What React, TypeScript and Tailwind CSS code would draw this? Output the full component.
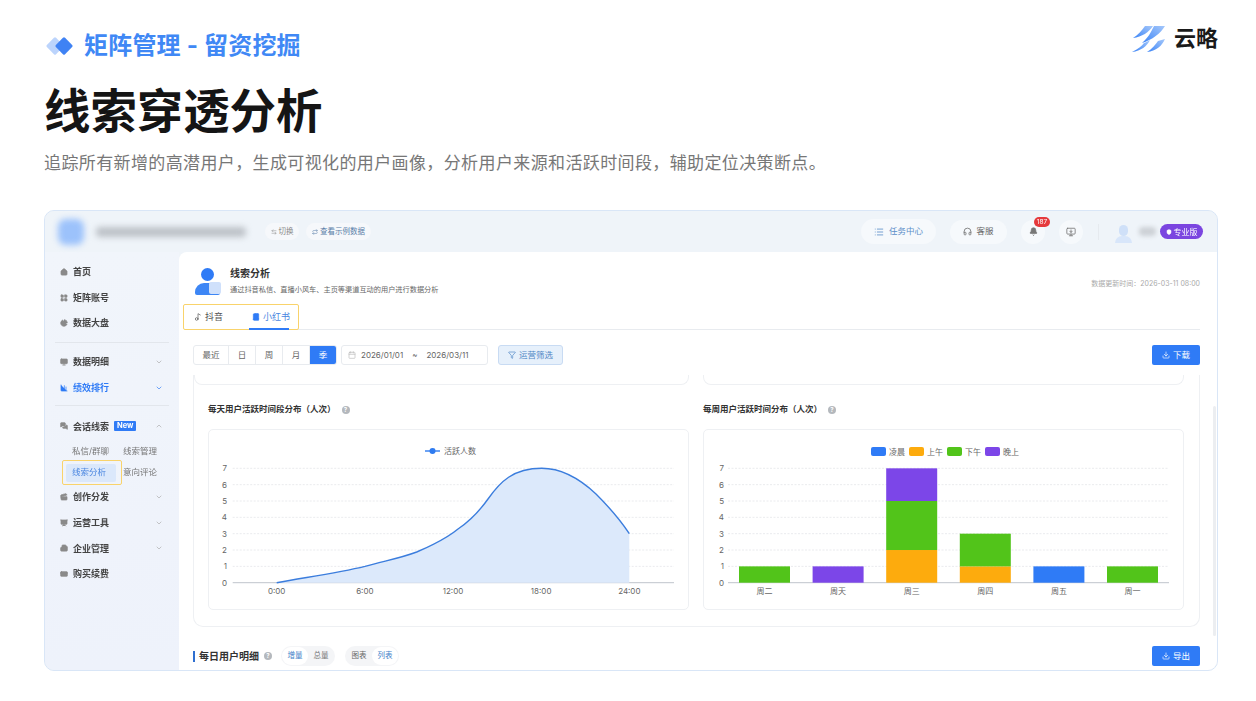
import {
  BarChart3,
  Bell,
  BookMarked,
  Building2,
  Calendar,
  ChevronDown,
  ChevronUp,
  Clapperboard,
  CreditCard,
  Download,
  Filter,
  Headphones,
  Home,
  LayoutGrid,
  List,
  MessagesSquare,
  Monitor,
  MonitorDown,
  Music2,
  PieChart,
  Presentation,
  Shield,
  ArrowLeftRight,
  Repeat,
} from "lucide-react";

const cjk = { fontFamily: '"Inter", "Noto Sans CJK SC", sans-serif' };

const ticks = [7, 6, 5, 4, 3, 2, 1, 0];
const tickY = (v: number) => 153.7 - v * 16.34;

function Grid({ x1, x2, lx }: { x1: number; x2: number; lx: number }) {
  return (
    <>
      {ticks.map((t) => (
        <g key={t}>
          <text x={lx} y={tickY(t) + 3} textAnchor="end" fontSize="8" fill="#666">
            {t}
          </text>
          {t === 0 ? (
            <line x1={x1} x2={x2} y1={tickY(t)} y2={tickY(t)} stroke="#bfc4cc" strokeWidth="1" />
          ) : (
            <line x1={x1} x2={x2} y1={tickY(t)} y2={tickY(t)} stroke="#e4e6ea" strokeWidth="0.8" strokeDasharray="2 1.5" />
          )}
        </g>
      ))}
    </>
  );
}

function AreaChart() {
  const curve =
    "M68.7 153.7C100 148 130 144 157 137.4C175 132 190 130 208.7 123C225 116 238 110 250 100C262 92 270 84 280 70C292 53 305 39.3 333.7 39.3C355 39.3 372 50 388 65C402 79 413 92 421.3 104.7";
  return (
    <svg viewBox="1 1 479 179" className="block w-full h-full" style={cjk}>
      <Grid x1={24.7} x2={466} lx={19} />
      <path d={curve + "V153.7Z"} fill="#dce9fb" />
      <path d={curve} fill="none" stroke="#3b7ddd" strokeWidth="1.4" />
      <line x1={217} x2={232} y1={22} y2={22} stroke="#2f7bf0" strokeWidth="1.4" />
      <circle cx={224.5} cy={22} r={3} fill="#2f7bf0" />
      <text x={236} y={25} fontSize="8" fill="#666">活跃人数</text>
      {["0:00", "6:00", "12:00", "18:00", "24:00"].map((l, i) => (
        <text key={l} x={68.7 + i * 88.15} y={165} textAnchor="middle" fontSize="8" fill="#666">
          {l}
        </text>
      ))}
    </svg>
  );
}

const colors = { dawn: "#2f7bf6", am: "#fdab0d", pm: "#52c41a", night: "#7c46e8" };

const bars: { label: string; segs: [string, number][] }[] = [
  { label: "周二", segs: [[colors.pm, 1]] },
  { label: "周天", segs: [[colors.night, 1]] },
  { label: "周三", segs: [[colors.am, 2], [colors.pm, 3], [colors.night, 2]] },
  { label: "周四", segs: [[colors.am, 1], [colors.pm, 2]] },
  { label: "周五", segs: [[colors.dawn, 1]] },
  { label: "周一", segs: [[colors.pm, 1]] },
];

const legend = [
  { name: "凌晨", color: colors.dawn, x: 168 },
  { name: "上午", color: colors.am, x: 206 },
  { name: "下午", color: colors.pm, x: 244 },
  { name: "晚上", color: colors.night, x: 282 },
];

function BarChart() {
  return (
    <svg viewBox="1 1 479 179" className="block w-full h-full" style={cjk}>
      <Grid x1={25} x2={466} lx={21} />
      {bars.map((b, i) => {
        const x = 36 + i * 73.6;
        let acc = 0;
        return (
          <g key={b.label}>
            {b.segs.map(([c, n]) => {
              const y = tickY(acc + n);
              acc += n;
              return <rect key={c} x={x} y={y} width={51} height={n * 16.34} fill={c} />;
            })}
            <text x={x + 25.5} y={165} textAnchor="middle" fontSize="8" fill="#666">
              {b.label}
            </text>
          </g>
        );
      })}
      {legend.map((l) => (
        <g key={l.name}>
          <rect x={l.x} y={18} width={15} height={9} rx={2} fill={l.color} />
          <text x={l.x + 18} y={25.5} fontSize="8" fill="#666">
            {l.name}
          </text>
        </g>
      ))}
    </svg>
  );
}

function NavItem({
  icon: Icon,
  label,
  arrow,
  active,
  children,
}: {
  icon: typeof Home;
  label: string;
  arrow?: "down" | "up";
  active?: boolean;
  children?: React.ReactNode;
}) {
  return (
    <div className={`flex items-center h-[25.7px] pl-[15px] pr-[16px] text-[9px] font-semibold ${active ? "text-[#2f7bf6]" : "text-[#444]"}`}>
      <Icon size={8} strokeWidth={2.2} className={`mr-[5px] ${active ? "text-[#2f7bf6]" : "text-[#8a8a8a]"}`} fill="currentColor" />
      <span>{label}</span>
      {children}
      {arrow === "down" && <ChevronDown size={8} className={`ml-auto ${active ? "text-[#2f7bf6]" : "text-[#aaa]"}`} />}
      {arrow === "up" && <ChevronUp size={8} className="ml-auto text-[#aaa]" />}
    </div>
  );
}

function Sidebar() {
  return (
    <aside className="w-[134px] shrink-0 pt-[7px] bg-gradient-to-b from-[#f1f5fb] to-[#eef2fb]">
      <NavItem icon={Home} label="首页" />
      <NavItem icon={LayoutGrid} label="矩阵账号" />
      <NavItem icon={PieChart} label="数据大盘" />
      <div className="mx-[10px] my-[6px] h-px bg-[#e2e6ec]" />
      <NavItem icon={Monitor} label="数据明细" arrow="down" />
      <NavItem icon={BarChart3} label="绩效排行" arrow="down" active />
      <div className="mx-[10px] mt-[5px] mb-[7px] h-px bg-[#e2e6ec]" />
      <NavItem icon={MessagesSquare} label="会话线索" arrow="up">
        <span className="ml-[5px] px-[3px] h-[10px] leading-[10px] rounded-[1px] bg-[#2f7bf6] text-white text-[7.5px] font-bold">New</span>
      </NavItem>
      <div className="relative grid grid-cols-[59px_1fr] mt-[2px] pl-[17px] text-[8.5px] text-[#777]">
        <div className="h-[21px] flex items-center pl-[10px] whitespace-nowrap">私信/群聊</div>
        <div className="h-[21px] flex items-center pl-[2px] whitespace-nowrap">线索管理</div>
        <div className="h-[21px] flex items-center">
          <div className="w-[50px] h-[18px] ml-[4px] rounded-[2px] bg-[#dbe8fb] text-[#4a86e0] flex items-center pl-[6px] whitespace-nowrap">线索分析</div>
        </div>
        <div className="h-[21px] flex items-center pl-[2px] whitespace-nowrap">意向评论</div>
        {/* 标注框 */}
        <div className="absolute left-[17px] top-[18.5px] w-[60px] h-[25px] border border-[#f9d36b] rounded-[2px]" />
      </div>
      <div className="h-px" />
      <NavItem icon={Clapperboard} label="创作分发" arrow="down" />
      <NavItem icon={Presentation} label="运营工具" arrow="down" />
      <NavItem icon={Building2} label="企业管理" arrow="down" />
      <NavItem icon={CreditCard} label="购买续费" />
    </aside>
  );
}

function TopBar() {
  return (
    <div className="h-[41px] flex items-center bg-[#eff4f9] pl-[13px] pr-[14px] text-[8.5px]">
      <div className="w-[26px] h-[26px] rounded-[8px] bg-[#9cc2fb] blur-[3px]" />
      <div className="ml-[12px] w-[150px] h-[10px] rounded bg-[#bcc1c7] blur-[3px]" />
      <div className="ml-[19px] h-[17px] w-[34px] rounded-full bg-[#f6f8fb] flex items-center justify-center gap-[2px] text-[#888] text-[7.5px]">
        <ArrowLeftRight size={6} />
        切换
      </div>
      <div className="ml-[7px] h-[17px] w-[65px] rounded-full bg-[#f6f8fb] flex items-center justify-center gap-[2px] text-[#5a7ea8] text-[7.5px]">
        <Repeat size={6} />
        查看示例数据
      </div>
      <div className="ml-auto flex items-center">
        <div className="w-[75px] h-[25px] rounded-full bg-[#f6f9fc] flex items-center justify-center gap-[5px] text-[#5c8fc9]">
          <List size={10} />
          任务中心
        </div>
        <div className="ml-[14px] w-[57px] h-[24px] rounded-full bg-[#f6f9fc] flex items-center justify-center gap-[4px] text-[#666]">
          <Headphones size={9} />
          客服
        </div>
        <div className="relative ml-[14px] w-[24px] h-[24px] rounded-full bg-[#f6f9fc] flex items-center justify-center">
          <Bell size={9} className="text-[#777]" fill="currentColor" />
          <span className="absolute left-[13px] top-[-3px] w-[16px] h-[10px] rounded-full bg-[#e5393c] text-white text-[6.5px] leading-[10px] text-center">187</span>
        </div>
        <div className="ml-[14px] w-[24px] h-[24px] rounded-full bg-[#f6f9fc] flex items-center justify-center">
          <MonitorDown size={10} className="text-[#777]" />
        </div>
        <div className="ml-[15px] w-px h-[16px] bg-[#e6eaef]" />
        <div className="ml-[15px] w-[18px] h-[22px] flex flex-col items-center justify-end">
          <div className="w-[9px] h-[11px] rounded-full bg-[#cfe0f8]" />
          <div className="w-[17px] h-[7px] rounded-t-full bg-[#d8e6fa]" />
        </div>
        <div className="ml-[7px] w-[17px] h-[9px] rounded bg-[#cdd1d6] blur-[2px]" />
        <div className="ml-[4px] w-[43px] h-[15px] rounded-full bg-[#7b45e0] text-white flex items-center justify-center gap-[2px] text-[8px]">
          <Shield size={6} fill="currentColor" />
          专业版
        </div>
      </div>
    </div>
  );
}

function Helper() {
  return (
    <span className="inline-flex w-[8px] h-[8px] rounded-full bg-[#b4b8bd] text-white text-[6px] leading-none items-center justify-center font-bold">
      ?
    </span>
  );
}

function ChartTitle({ children }: { children: string }) {
  return (
    <div className="flex items-center gap-[6px] text-[8.5px] font-semibold text-[#333] h-[20px] pt-[1px]">
      {children}
      <Helper />
    </div>
  );
}

function Content() {
  return (
    <main className="flex-1 min-w-0 bg-white rounded-tl-lg pl-[14px] pr-[17px] relative">
      {/* 页头 */}
      <div className="h-[52px] flex items-center">
        <div className="relative w-[26px] h-[28px] mt-[8px] ml-[2px]">
          <div className="absolute left-[6px] top-0 w-[13px] h-[13px] rounded-full bg-[#2f7bf6]" />
          <div className="absolute left-0 top-[15px] w-[25px] h-[12px] rounded-t-[9px] rounded-b-[2px] bg-[#3d86f5]" />
          <div className="absolute left-[14px] top-[14px] w-[12px] h-[12px] rounded-[2px] bg-[#cfe0fb]" />
        </div>
        <div className="ml-[9px] mt-[8px]">
          <div className="text-[10px] font-semibold text-[#333] leading-[16px]">线索分析</div>
          <div className="text-[7.2px] text-[#666] leading-[18px]">通过抖音私信、直播小风车、主页等渠道互动的用户进行数据分析</div>
        </div>
        <div className="ml-auto mt-[12px] text-[7px] text-[#aaa]">数据更新时间：2026-03-11 08:00</div>
      </div>
      {/* 平台切换 */}
      <div className="relative h-[26px] border-b border-[#e8ebef] text-[9px]">
        <div className="absolute left-[-10px] top-0 w-[116px] h-[26px] border border-[#f9d36b] rounded-[2px] flex items-center">
          <div className="flex items-center gap-[3px] pl-[10px] text-[#555]">
            <Music2 size={8} />
            抖音
          </div>
          <div className="flex items-center gap-[3px] pl-[29px] text-[#4a86e0]">
            <BookMarked size={8} className="text-[#2f7bf6]" fill="currentColor" />
            小红书
          </div>
        </div>
        <div className="absolute left-[56px] bottom-[-1px] w-[40px] h-[2px] bg-[#2f7bf6]" />
      </div>
      {/* 筛选栏 */}
      <div className="flex items-center h-[20px] mt-[15px] text-[8.5px]">
        <div className="flex h-[20px] border border-[#e8ebef] rounded-[3px] text-[#666] overflow-hidden">
          <div className="w-[35px] flex items-center justify-center border-r border-[#e8ebef]">最近</div>
          {["日", "周", "月"].map((t) => (
            <div key={t} className="w-[27px] flex items-center justify-center border-r border-[#e8ebef]">
              {t}
            </div>
          ))}
          <div className="w-[26px] bg-[#2f7bf6] text-white flex items-center justify-center">季</div>
        </div>
        <div className="ml-[4px] w-[147px] h-[20px] border border-[#e8ebef] rounded-[3px] flex items-center pl-[6px] text-[#666] text-[8px]">
          <Calendar size={8} className="text-[#bbb]" />
          <span className="ml-[5px]">2026/01/01</span>
          <span className="ml-[9px]">~</span>
          <span className="ml-[9px]">2026/03/11</span>
        </div>
        <div className="ml-[10px] w-[65px] h-[20px] rounded-[3px] border border-[#c8dbf3] bg-[#e6f0fb] text-[#4f86c5] flex items-center justify-center gap-[3px]">
          <Filter size={8} />
          运营筛选
        </div>
        <div className="ml-auto w-[48px] h-[20px] rounded-[2px] bg-[#2f7bf6] text-white flex items-center justify-center gap-[3px]">
          <Download size={8} />
          下载
        </div>
      </div>
      {/* 图表 */}
      <div className="mt-[10px] h-[252px] border-x border-b border-[#eef0f3] rounded-b-[10px] pl-[14px] pr-[15px]">
        <div className="grid grid-cols-2 gap-[14px] h-[10px]">
          <div className="border-b border-x border-[#eef0f3] rounded-b-lg -ml-[14px]" />
          <div className="border-b border-x border-[#eef0f3] rounded-b-lg" />
        </div>
        <div className="grid grid-cols-2 gap-[14px] mt-[14px]">
          <div>
            <ChartTitle>每天用户活跃时间段分布（人次）</ChartTitle>
            <div className="mt-[10px] h-[181px] border border-[#eef0f3] rounded-[5px]">
              <AreaChart />
            </div>
          </div>
          <div>
            <ChartTitle>每周用户活跃时间分布（人次）</ChartTitle>
            <div className="mt-[10px] h-[181px] border border-[#eef0f3] rounded-[5px]">
              <BarChart />
            </div>
          </div>
        </div>
      </div>
      {/* 底部 */}
      <div className="flex items-center h-[20px] mt-[19px]">
        <div className="w-[2px] h-[11px] bg-[#2f6fd0]" />
        <div className="ml-[4px] text-[10px] font-semibold text-[#333]">每日用户明细</div>
        <div className="ml-[5px] flex">
          <Helper />
        </div>
        <div className="ml-[9px] flex items-center h-[20px] rounded-full bg-[#f4f5f7] p-[1px] text-[7.5px]">
          <div className="w-[26px] h-[18px] rounded-full bg-white text-[#3f7fc9] flex items-center justify-center">增量</div>
          <div className="w-[26px] text-center text-[#777]">总量</div>
        </div>
        <div className="ml-[10px] flex items-center h-[20px] rounded-full bg-[#f4f5f7] p-[1px] text-[7.5px]">
          <div className="w-[26px] text-center text-[#666]">图表</div>
          <div className="w-[26px] h-[18px] rounded-full bg-white text-[#3f7fc9] flex items-center justify-center">列表</div>
        </div>
        <div className="ml-auto w-[48px] h-[20px] rounded-[2px] bg-[#2f7bf6] text-white text-[8.5px] flex items-center justify-center gap-[3px]">
          <Download size={8} />
          导出
        </div>
      </div>
      {/* 滚动条 */}
      <div className="absolute right-[1px] top-[154px] w-[3px] h-[230px] rounded-full bg-[#eceef1]" />
    </main>
  );
}

export default function App() {
  return (
    <div className="w-[1256px] h-[701px] bg-white overflow-hidden px-[44px]" style={cjk}>
      <header className="flex justify-between pt-[25px] h-[66px]">
        <div className="flex items-center h-[42px]">
          <svg width="30" height="20" viewBox="0 0 30 20" className="ml-[1px]">
            <rect x="3.5" y="3.5" width="13" height="13" rx="1.5" transform="rotate(45 10 10)" fill="#bcd4fc" />
            <rect x="12.5" y="3.5" width="13" height="13" rx="1.5" transform="rotate(45 19 10)" fill="#3f82f4" />
          </svg>
          <div className="ml-[9px] text-[24px] leading-none font-bold text-[#4088f5] tracking-[0.2px]">矩阵管理 - 留资挖掘</div>
        </div>
        <div className="flex items-center h-[32px] -mt-[3px] -mr-[6px]">
          <svg width="36" height="28" viewBox="0 -2 36 28">
            <defs>
              <linearGradient id="lg" x1="0" y1="1" x2="1" y2="0">
                <stop offset="0" stopColor="#3c84f6" />
                <stop offset="1" stopColor="#a5c8fb" />
              </linearGradient>
            </defs>
            <path d="M1 12C6 9 10 4 13 0H21C17 6 10 11 1 12Z" fill="url(#lg)" />
            <path d="M22 0H33C29 7 20 14 10 17C16 12 19 6 22 0Z" fill="url(#lg)" />
            <path d="M0 26C6 23 10 20 12 17C15 16 16 15 18 14C15 20 9 25 0 26Z" fill="url(#lg)" />
            <path d="M15 26C20 23 24 18 26 15L33 13C30 20 24 25 15 26Z" fill="url(#lg)" />
          </svg>
          <div className="ml-[6px] text-[22px] leading-none font-bold text-[#1a1a1a]">云略</div>
        </div>
      </header>
      <h1 className="mt-[15px] text-[46.4px] leading-[60px] font-bold text-[#151515]">线索穿透分析</h1>
      <p className="mt-[10px] text-[17px] leading-[24px] tracking-[0.38px] text-[#777]">
        追踪所有新增的高潜用户，生成可视化的用户画像，分析用户来源和活跃时间段，辅助定位决策断点。
      </p>
      <section className="mt-[35px] h-[461px] w-[1174px] rounded-[10px] border border-[#d9e6f7] overflow-hidden bg-[#eff4f9]">
        <div className="flex flex-col h-full blur-[0.3px]">
          <TopBar />
          <div className="flex flex-1 min-h-0">
            <Sidebar />
            <Content />
          </div>
        </div>
      </section>
    </div>
  );
}
